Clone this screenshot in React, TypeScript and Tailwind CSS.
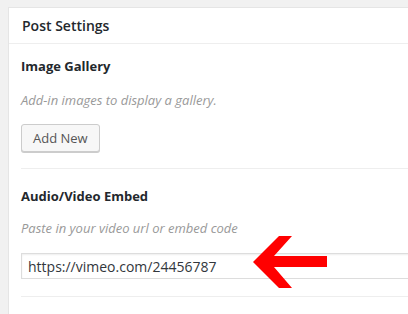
export default function App() {
  return (
    <div className="relative w-[408px] h-[314px] overflow-hidden bg-[#f1f1f1] pl-2 pt-[7px]" style={{ fontFamily: '"Open Sans", sans-serif' }}>
      <div className="w-[420px] h-[400px] bg-white border border-[#e5e5e5]">
        <div className="h-[36px] border-b border-[#eeeeee] px-[13px] flex items-center">
          <h2 className="text-[14px] font-semibold text-[#23282d] leading-none">Post Settings</h2>
        </div>
        <div className="pl-[12px]">
          <div className="pt-[12px]">
            <h3 className="text-[13px] font-bold text-[#23282d] leading-[20px]">Image Gallery</h3>
            <p className="mt-[15px] text-[13px] italic text-[#999999] leading-[18px]">Add-in images to display a gallery.</p>
            <button className="block mt-[15px] h-[28px] px-[11px] rounded-[3px] border border-[#cccccc] bg-[#f7f7f7] shadow-[0_1px_0_#cccccc] text-[13px] text-[#555555] leading-none">Add New</button>
          </div>
          <div className="mt-[16px] border-t border-[#eeeeee]" />
          <div className="pt-[17px]">
            <h3 className="text-[13px] font-bold text-[#23282d] leading-[20px]">Audio/Video Embed</h3>
            <p className="mt-[13px] text-[13px] italic text-[#999999] leading-[18px]">Paste in your video url or embed code</p>
            <div className="mt-[16px] h-[26px] border border-[#dddddd] flex items-center pl-[6px] text-[14px] text-[#32373c] shadow-[inset_0_1px_2px_rgba(0,0,0,0.07)]">https://vimeo.com/24456787</div>
          </div>
          <div className="mt-[17px] border-t border-[#eeeeee]" />
        </div>
      </div>
      <svg className="absolute left-0 top-0" width="408" height="314" viewBox="0 0 408 314">
        <polygon points="253,262 279,236 292,236 274,256 327,256 327,267 274,267 292,288 279,288" fill="#ff0000" />
      </svg>
    </div>
  );
}
